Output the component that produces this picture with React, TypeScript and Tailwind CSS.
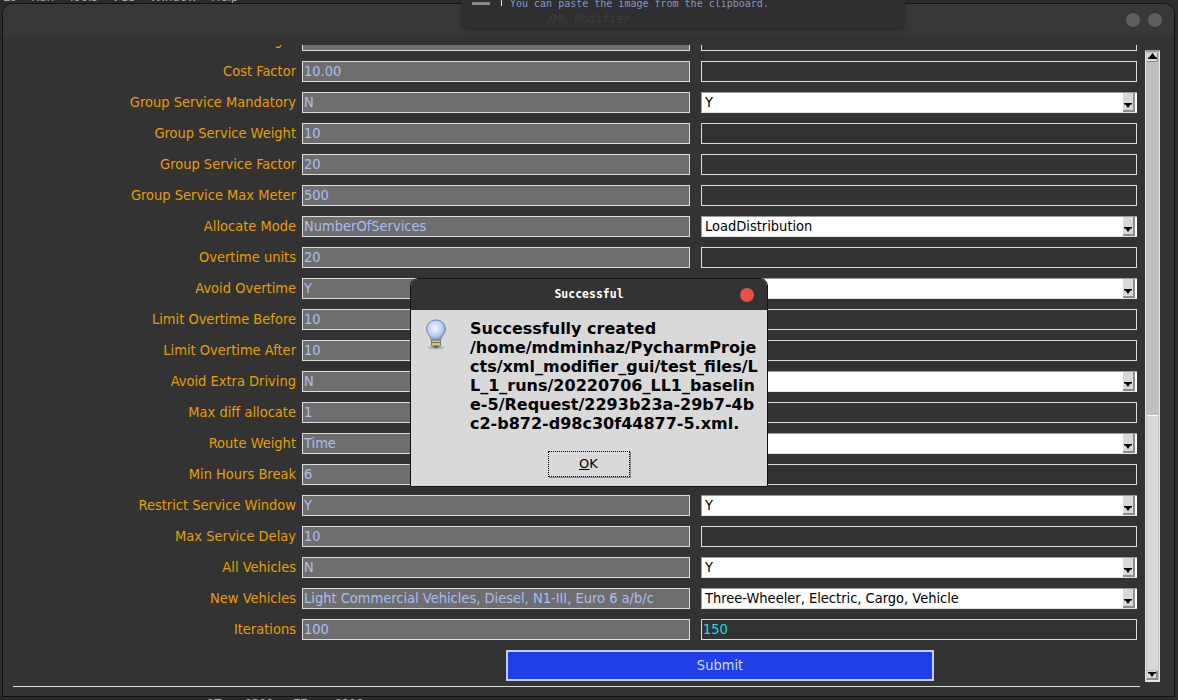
const rows = [
  { label: "Cost Weight", value: "10", right: "", kind: "input" },
  { label: "Cost Factor", value: "10.00", right: "", kind: "input" },
  { label: "Group Service Mandatory", value: "N", right: "Y", kind: "select" },
  { label: "Group Service Weight", value: "10", right: "", kind: "input" },
  { label: "Group Service Factor", value: "20", right: "", kind: "input" },
  { label: "Group Service Max Meter", value: "500", right: "", kind: "input" },
  { label: "Allocate Mode", value: "NumberOfServices", right: "LoadDistribution", kind: "select" },
  { label: "Overtime units", value: "20", right: "", kind: "input" },
  { label: "Avoid Overtime", value: "Y", right: "", kind: "select" },
  { label: "Limit Overtime Before", value: "10", right: "", kind: "input" },
  { label: "Limit Overtime After", value: "10", right: "", kind: "input" },
  { label: "Avoid Extra Driving", value: "N", right: "", kind: "select" },
  { label: "Max diff allocate", value: "1", right: "", kind: "input" },
  { label: "Route Weight", value: "Time", right: "", kind: "select" },
  { label: "Min Hours Break", value: "6", right: "", kind: "input" },
  { label: "Restrict Service Window", value: "Y", right: "Y", kind: "select" },
  { label: "Max Service Delay", value: "10", right: "", kind: "input" },
  { label: "All Vehicles", value: "N", right: "Y", kind: "select" },
  { label: "New Vehicles", value: "Light Commercial Vehicles, Diesel, N1-III, Euro 6 a/b/c", right: "Three-Wheeler, Electric, Cargo, Vehicle", kind: "select" },
  { label: "Iterations", value: "100", right: "150", kind: "input" },
];

const dialogLines = [
  "Successfully created",
  "/home/mdminhaz/PycharmProje",
  "cts/xml_modifier_gui/test_files/L",
  "L_1_runs/20220706_LL1_baselin",
  "e-5/Request/2293b23a-29b7-4b",
  "c2-b872-d98c30f44877-5.xml.",
];

function ArrowButton({ small }: { small?: boolean }) {
  return (
    <div className={`flex items-end justify-center bg-[#d9d9d9] border-r-2 border-b-2 border-[#8c8c8c] ${small ? "h-[9px] w-[11px] pb-px" : "h-[19px] w-[12px] pb-[2px]"}`}>
      <svg width="8" height="5" viewBox="0 0 8 5">
        <path d="M0 0h8v1.5H6.5L4 5 1.5 1.5H0z" fill="#000" />
      </svg>
    </div>
  );
}

function LightBulb() {
  return (
    <svg width="24" height="32" viewBox="0 0 24 32">
      <defs>
        <radialGradient id="glass" cx="45%" cy="40%" r="60%">
          <stop offset="0%" stopColor="#f4f8ff" />
          <stop offset="65%" stopColor="#b7cdf0" />
          <stop offset="100%" stopColor="#6f8fc9" />
        </radialGradient>
        <radialGradient id="shade" cx="50%" cy="50%" r="50%">
          <stop offset="0%" stopColor="#8a8a8a" />
          <stop offset="100%" stopColor="#d9d9d9" />
        </radialGradient>
      </defs>
      <ellipse cx="12" cy="28.5" rx="10" ry="2.5" fill="url(#shade)" />
      <path d="M12 1C6.6 1 2.5 5 2.5 10c0 4.6 4 6.500 4.900 11.500h9.200C17.500 16.500 21.500 14.600 21.500 10 21.500 5 17.400 1 12 1z" fill="url(#glass)" stroke="#6d88b8" strokeWidth="1" />
      <rect x="7.500" y="21" width="9" height="6" rx="1" fill="#c9c68e" stroke="#77765a" strokeWidth="1" />
      <path d="M7.500 23.500h9" stroke="#77765a" />
      <rect x="10" y="27" width="4" height="1.500" fill="#55543f" />
    </svg>
  );
}

function FormRow({ row }: { row: (typeof rows)[number] }) {
  return (
    <div className="flex h-[21px] items-start font-['DejaVu_Sans_Condensed','DejaVu_Sans',sans-serif] text-[14.500px]">
      <div className="w-[293px] shrink-0 pl-2 text-right leading-[20px] text-[#e69f00]">{row.label}</div>
      <div className="ml-[6px] h-[21px] w-[388px] shrink-0 border border-[#dcdcdc] bg-[#6e6e6e] pl-[1px] leading-[18px] whitespace-nowrap text-[#aabdf2]">
        {row.value}
      </div>
      {row.kind === "select" ? (
        <div className="ml-[11px] flex h-[21px] w-[436px] shrink-0 items-center justify-between border-y border-l border-t-[#9a9a9a] border-b-[#e4e4e4] border-l-[#9a9a9a] bg-white pr-[2px] pl-[3px] leading-[18px] text-black">
          <span className="-mt-px">{row.right}</span>
          <ArrowButton />
        </div>
      ) : (
        <div className="ml-[11px] h-[21px] w-[436px] shrink-0 border border-[#dcdcdc] pl-[1px] leading-[18px] text-[#1ed8e0]">
          {row.right}
        </div>
      )}
    </div>
  );
}

export default function App() {
  return (
    <div className="relative flex h-[700px] w-[1178px] flex-col overflow-hidden bg-[#2b2b2b] font-['DejaVu_Sans',sans-serif]">
      {/* ide menu bar peeking out above the window */}
      <div className="h-[3px] shrink-0 overflow-hidden">
        <div className="-mt-[10px] flex text-[12px] leading-[14px] text-[#a9a9a9]">
          <span className="w-[31px] pl-[3px]">Lo</span>
          <span>Run</span>
          <span className="ml-[14px]">Tools</span>
          <span className="ml-[14px]">VCS</span>
          <span className="ml-[14px]">Window</span>
          <span className="ml-[14px]">Help</span>
        </div>
      </div>

      <div className="mr-[3px] ml-[2px] flex h-[694px] shrink-0 flex-col overflow-hidden rounded-t-[10px] border border-[#111] bg-[#333333]">
        <div className="flex h-[31px] shrink-0 items-center justify-end gap-2 bg-[#383838] pr-[12px]">
          <div className="h-[14px] w-[14px] rounded-full bg-[#5e5e5e]" />
          <div className="h-[14px] w-[14px] rounded-full bg-[#5e5e5e]" />
        </div>

        <div className="flex flex-1 flex-col pt-[10px]">
          <div className="flex">
            <div className="h-[637px] w-[1142px] shrink-0 overflow-hidden">
              <div className="-mt-[15px] flex flex-col gap-[10px]">
                {rows.map((row) => (
                  <FormRow key={row.label} row={row} />
                ))}
                <div className="flex justify-start pl-[503px]">
                  <div className="flex h-[31px] w-[428px] items-center justify-center border-2 border-[#c9cdf0] bg-[#1f3fe8] font-['DejaVu_Sans_Condensed','DejaVu_Sans',sans-serif] text-[14.500px] text-[#d5dcff]">
                    Submit
                  </div>
                </div>
              </div>
            </div>

            <div className="mt-[5px] flex h-[632px] w-[15px] shrink-0 flex-col items-center border-x border-t-2 border-b-2 border-x-[#e6e6e6] border-t-[#9a9a9a] border-b-[#e6e6e6] bg-[#c0c0c0] px-[1px]">
              <div className="mt-[1px] flex h-[9px] w-[11px] items-start justify-center border-r border-b border-[#8c8c8c] bg-[#d9d9d9]">
                <svg width="9" height="6" viewBox="0 0 9 6">
                  <path d="M4.500 0L8 4.500h1V6H0V4.500h1z" fill="#000" />
                </svg>
              </div>
              <div className="mt-[353px] mb-[1px] h-[255px] w-full border-t border-white bg-[#d9d9d9]" />
              <ArrowButton small />
            </div>
          </div>

          <div className="mt-[4px] ml-[10px] h-px w-[1127px] bg-[#dedede]" />
        </div>
      </div>

      {/* terminal text peeking out below the window */}
      <div className="h-[3px] shrink-0 overflow-hidden pl-[207px]">
        <div className="flex font-['DejaVu_Sans_Mono',monospace] text-[12px] leading-[14px] text-[#a9a9a9]">
          <span>1T</span>
          <span className="ml-[23px]">0200</span>
          <span className="ml-[20px]">77</span>
          <span className="ml-[27px]">0218</span>
        </div>
      </div>

      {/* notification sliding over the window */}
      <div className="absolute top-0 left-[462px] flex h-[28px] w-[443px] rounded-b-[6px] bg-[#2f2f2f] font-['DejaVu_Sans_Mono',monospace] shadow-[0_2px_4px_rgba(0,0,0,0.3)]">
        <div className="flex h-[6px] w-[40px] shrink-0 items-end justify-start border-r border-[#e8e8e8] pl-[10px]">
          <div className="mb-px h-[3px] w-[18px] bg-[#8a8a8a]" />
        </div>
        <div className="pl-[8px]">
          <div className="-mt-[3px] text-[10px] leading-[13px] whitespace-nowrap text-[#8098c8]">You can paste the image from the clipboard.</div>
          <div className="mt-[3px] pl-[37px] text-[11.500px] leading-[13px] text-[#3d3d3d]">XML Modifier</div>
        </div>
      </div>

      {/* success dialog */}
      <div className="absolute top-[278px] left-[410px] flex h-[209px] w-[358px] flex-col overflow-hidden rounded-t-[8px] border border-[#111] bg-[#d9d9d9]">
        <div className="relative flex h-[31px] shrink-0 items-center justify-center bg-[#333333] font-['DejaVu_Sans_Mono',monospace] text-[11.500px] font-bold text-white">
          Successful
          <div className="absolute top-[9px] right-[13px] h-[14px] w-[14px] rounded-full bg-[#ea5048]" />
        </div>
        <div className="flex flex-1 flex-col">
          <div className="flex pt-[9px] pl-[13px]">
            <div className="w-[46px] shrink-0">
              <LightBulb />
            </div>
            <div className="text-[16px] leading-[19px] font-bold whitespace-nowrap text-black">
              {dialogLines.map((line) => (
                <div key={line}>{line}</div>
              ))}
            </div>
          </div>
          <div className="mt-[18px] flex justify-center pr-[1px]">
            <div className="flex h-[26px] w-[82px] items-center justify-center border border-dotted border-black bg-[#d9d9d9] text-[13px] text-black shadow-[1px_1px_0_#8a8a8a]">
              <span className="underline">O</span>K
            </div>
          </div>
        </div>
      </div>
    </div>
  );
}
